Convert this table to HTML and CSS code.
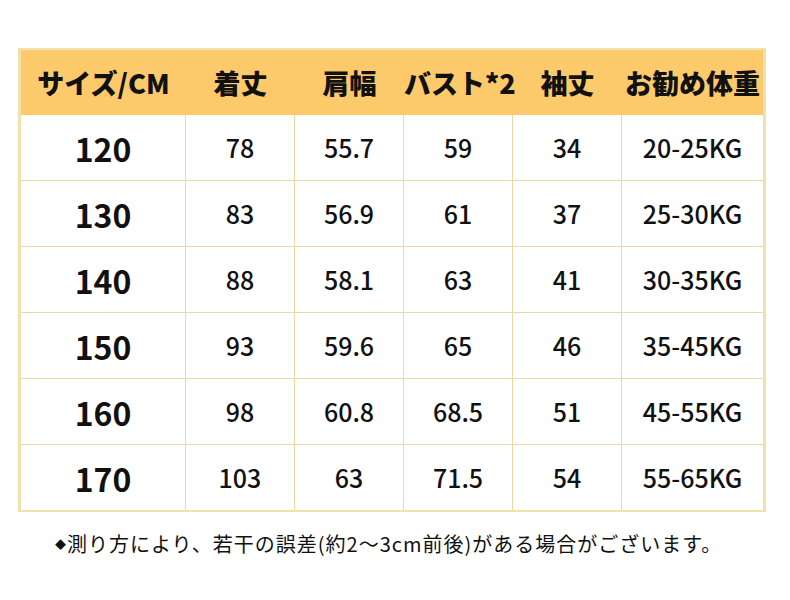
FILE: index.html
```html
<!DOCTYPE html>
<html lang="ja">
<head>
<meta charset="utf-8">
<link rel="stylesheet" href="styles.css">
</head>
<body>
<div class="page">
  <div class="frame">
    <table class="sizes">
      <colgroup>
        <col class="c1"><col class="c2"><col class="c2"><col class="c2"><col class="c2"><col class="c6">
      </colgroup>
      <thead>
        <tr><th>サイズ/CM</th><th>着丈</th><th>肩幅</th><th>バスト*2</th><th>袖丈</th><th>お勧め体重</th></tr>
      </thead>
      <tbody>
        <tr><td class="size">120</td><td>78</td><td>55.7</td><td>59</td><td>34</td><td>20-25KG</td></tr>
        <tr><td class="size">130</td><td>83</td><td>56.9</td><td>61</td><td>37</td><td>25-30KG</td></tr>
        <tr><td class="size">140</td><td>88</td><td>58.1</td><td>63</td><td>41</td><td>30-35KG</td></tr>
        <tr><td class="size">150</td><td>93</td><td>59.6</td><td>65</td><td>46</td><td>35-45KG</td></tr>
        <tr><td class="size">160</td><td>98</td><td>60.8</td><td>68.5</td><td>51</td><td>45-55KG</td></tr>
        <tr><td class="size">170</td><td>103</td><td>63</td><td>71.5</td><td>54</td><td>55-65KG</td></tr>
      </tbody>
    </table>
  </div>
  <p class="note"><span class="dia">◆</span>測り方により、若干の誤差(約2～3cm前後)がある場合がございます。</p>
</div>
</body>
</html>
```
FILE: styles.css
```css
html, body {
  margin: 0;
  padding: 0;
  background: #ffffff;
}
body {
  font-family: "Noto Sans CJK JP", "Noto Sans", sans-serif;
  color: #111111;
}
.page {
  width: 790px;
  height: 600px;
  padding-top: 48px;
  box-sizing: border-box;
}
.frame {
  margin-left: 18px;
  width: 748px;
  box-sizing: border-box;
  border: 3px solid #f1e2ad;
  border-top-width: 2px;
  border-bottom-width: 2px;
}
.sizes {
  border-collapse: separate;
  border-spacing: 0;
  table-layout: fixed;
  width: 742px;
}
.c1 { width: 165px; }
.c2 { width: 109px; }
.c6 { width: 141px; }
.sizes th {
  background: #fdca6b;
  height: 65px;
  padding: 0;
  font-size: 27px;
  font-weight: 900;
  text-align: center;
  vertical-align: middle;
  white-space: nowrap;
  line-height: 1;
}
.sizes td {
  height: 65px;
  padding: 0;
  text-align: center;
  vertical-align: middle;
  font-size: 25px;
  font-weight: 500;
  line-height: 1;
  border-right: 1px solid #ead9a2;
  border-bottom: 1px solid #ead9a2;
}
.sizes td:last-child {
  border-right: none;
}
.sizes tbody tr:last-child td {
  border-bottom: none;
}
.sizes td.size {
  font-size: 32px;
  font-weight: 700;
}
.note {
  margin: 17px 0 0 55px;
  font-size: 20px;
  line-height: 30px;
  letter-spacing: 1px;
  white-space: nowrap;
}
.dia {
  font-size: 11px;
  vertical-align: 3px;
  margin-right: 1px;
  letter-spacing: 0;
}
```
